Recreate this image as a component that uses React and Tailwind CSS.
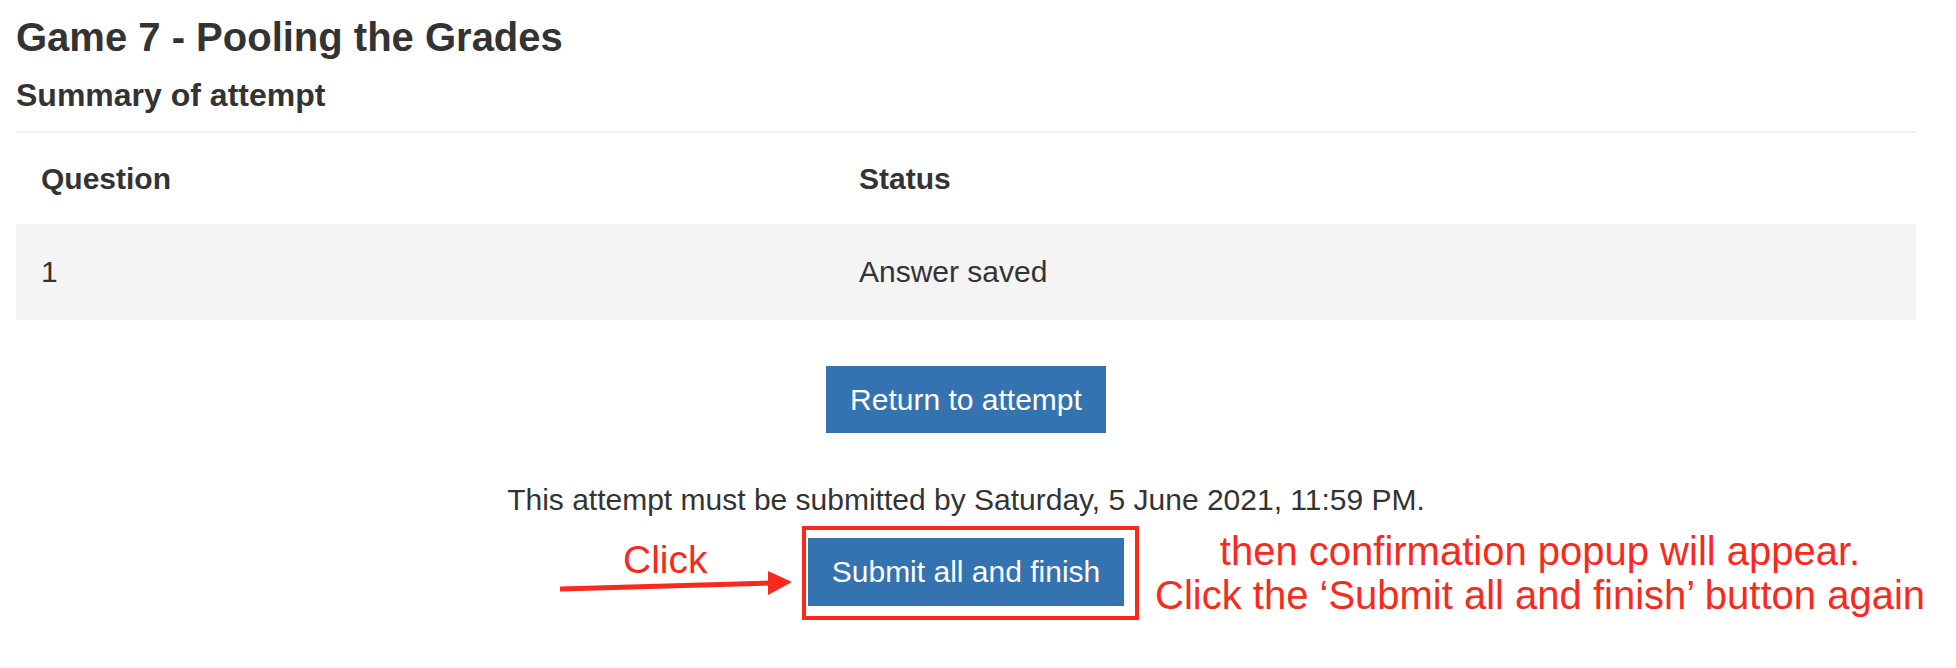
export default function App() {
  return (
    <div className="min-h-[668px] w-full bg-white font-['Liberation_Sans',Arial,sans-serif] text-[#333333]">
      <div className="pl-[16px] pr-[40px]">
        <h2 className="mt-[13px] text-[40px] font-bold leading-[48px]">
          Game 7 - Pooling the Grades
        </h2>
        <h3 className="mt-[15px] text-[32px] font-bold leading-[38px]">
          Summary of attempt
        </h3>
        <div className="mt-[17px] h-[2px] bg-[#f0f0f0]" />

        <div className="text-[30px] leading-[34px]">
          <div className="grid h-[91px] grid-cols-[818px_1fr] items-center font-bold">
            <div className="pl-[25px]">Question</div>
            <div className="pl-[25px]">Status</div>
          </div>
          <div className="grid h-[96px] grid-cols-[818px_1fr] items-center bg-[#f4f4f4]">
            <div className="pl-[25px]">1</div>
            <div className="pl-[25px]">Answer saved</div>
          </div>
        </div>

        <div className="mt-[46px] flex justify-center">
          <button className="flex h-[67px] w-[280px] items-center justify-center bg-[#3572b0] text-[30px] leading-[34px] text-white">
            Return to attempt
          </button>
        </div>

        <p className="mt-[50px] text-center text-[30px] leading-[34px]">
          This attempt must be submitted by Saturday, 5 June 2021, 11:59 PM.
        </p>

        <div className="mt-[21px] flex justify-center">
          <div className="relative">
            <button className="flex h-[68px] w-[316px] items-center justify-center bg-[#3572b0] text-[30px] leading-[34px] text-white">
              Submit all and finish
            </button>

            {/* annotation: red frame */}
            <div className="pointer-events-none absolute left-[-6px] top-[-12px] h-[94px] w-[337px] border-[4px] border-[#f9291b]" />

            {/* annotation: arrow */}
            <svg
              className="absolute left-[-253px] top-[27px]"
              width="240"
              height="35"
              viewBox="0 0 240 35"
            >
              <line x1="5" y1="24" x2="216" y2="18" stroke="#f9291b" strokeWidth="5" />
              <polygon points="237,17 213,6 213,30" fill="#f9291b" />
            </svg>

            {/* annotation: Click */}
            <div className="absolute left-[-185px] top-[2px] whitespace-nowrap text-[39px] leading-[39px] text-[#f9291b]">
              Click
            </div>

            {/* annotation: instructions */}
            <div className="absolute left-[calc(100%+31px)] top-[-9px] whitespace-nowrap text-center text-[40px] leading-[44px] text-[#f9291b]">
              <div>then confirmation popup will appear.</div>
              <div>Click the ‘Submit all and finish’ button again</div>
            </div>
          </div>
        </div>
      </div>
    </div>
  );
}
